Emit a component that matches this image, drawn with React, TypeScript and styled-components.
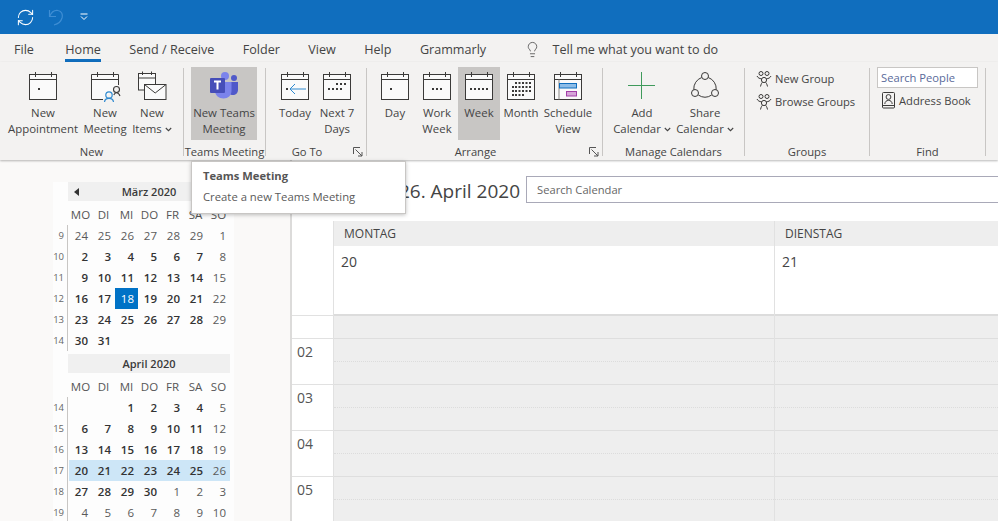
import React from "react";
import styled, { createGlobalStyle } from "styled-components";
import { Lightbulb, RefreshCw } from "lucide-react";

const GlobalStyle = createGlobalStyle`
  html, body {
    margin: 0;
    padding: 0;
    background: #fff;
    overflow: hidden;
  }
  * {
    box-sizing: border-box;
  }
`;

const Window = styled.div`
  width: 998px;
  height: 521px;
  overflow: hidden;
  position: relative;
  display: flex;
  flex-direction: column;
  font-family: "Open Sans", "Noto Sans", sans-serif;
  font-size: 11.2px;
  color: #444;
`;

const TitleBar = styled.div`
  height: 34px;
  flex: none;
  background: #106ebe;
  display: flex;
  align-items: center;
  padding-left: 16px;
  color: #fff;
`;

const QuickButton = styled.div<{ $width: number }>`
  width: ${(p) => p.$width}px;
  display: flex;
  align-items: center;
  color: #fff;
`;

const Tabs = styled.div`
  height: 28px;
  flex: none;
  background: #f3f2f1;
  display: flex;
  padding-left: 14px;
  gap: 28.4px;
`;

const Tab = styled.div<{ $active?: boolean; $extra?: number }>`
  height: 28px;
  padding-top: 7px;
  line-height: 18px;
  font-size: 12.6px;
  margin-right: ${(p) => p.$extra ?? 0}px;
  border-bottom: 3px solid ${(p) => (p.$active ? "#106ebe" : "transparent")};
  white-space: nowrap;
`;

const TellMe = styled.div`
  display: flex;
  align-items: center;
  gap: 12px;
  height: 28px;
  padding-top: 2px;
  margin-left: 9px;
  font-size: 12.6px;
`;

const Ribbon = styled.div`
  height: 98px;
  flex: none;
  background: #f3f2f1;
  display: flex;
  padding-top: 5px;
  position: relative;
  z-index: 1;
  box-shadow: 0 1px 2px rgba(0, 0, 0, 0.28);
`;

const Group = styled.div<{ $width: number }>`
  width: ${(p) => p.$width}px;
  flex: none;
  display: flex;
  flex-direction: column;
  height: 92px;
`;

const GroupBody = styled.div<{ $pad: number }>`
  height: 78px;
  padding-left: ${(p) => p.$pad}px;
  display: flex;
  align-items: flex-start;
`;

const StackBody = styled(GroupBody)`
  flex-direction: column;
`;

const GroupFooter = styled.div`
  height: 14px;
  line-height: 14px;
  display: flex;
  align-items: center;
`;

const GroupLabel = styled.div`
  flex: 1;
  text-align: center;
  white-space: nowrap;
`;

const LauncherSlot = styled.svg`
  width: 10px;
  height: 10px;
  margin: 0 3px 0 5px;
  flex: none;
`;

const GroupDivider = styled.div`
  width: 1px;
  height: 88px;
  margin-top: 1px;
  flex: none;
  background: #c8c6c4;
`;

const BigButton = styled.div<{ $width: number; $active?: boolean }>`
  width: ${(p) => p.$width}px;
  height: 73px;
  flex: none;
  padding-top: 4px;
  display: flex;
  flex-direction: column;
  align-items: center;
  background: ${(p) => (p.$active ? "#c8c6c4" : "transparent")};
`;

const ButtonText = styled.div`
  margin-top: 2px;
  font-size: 11.4px;
  line-height: 16px;
  text-align: center;
  white-space: nowrap;
`;

const Chevron = styled.svg`
  width: 7px;
  height: 5px;
  margin-left: 3px;
  vertical-align: 1px;
`;

const SmallRow = styled.div<{ $height: number }>`
  height: ${(p) => p.$height}px;
  display: flex;
  align-items: center;
  gap: 3px;
  white-space: nowrap;
`;

const SearchPeople = styled.div`
  width: 101px;
  height: 21px;
  background: #fff;
  border: 1px solid #c8c6c4;
  line-height: 19px;
  padding-left: 3px;
  color: #5a6a9a;
`;

const AddressRow = styled(SmallRow)`
  padding-left: 5px;
  gap: 4px;
  margin-top: 1px;
`;

const Body = styled.div`
  flex: 1;
  min-height: 0;
  display: flex;
`;

const Nav = styled.div`
  width: 292px;
  flex: none;
  background: #faf9f8;
  border-right: 2px solid #dcdbda;
  padding: 22px 0 0 53px;
`;

const NavPanel = styled.div`
  width: 181px;
  height: 100%;
  background: #fdfdfd;
`;

const Month = styled.div`
  height: 172px;
`;

const MonthHeader = styled.div`
  margin-left: 15px;
  width: 162px;
  height: 19px;
  background: #f0f0f0;
  display: flex;
  align-items: center;
  justify-content: center;
  position: relative;
  font-weight: 600;
  font-size: 11px;
  color: #3a3a3a;
`;

const PrevArrow = styled.div`
  position: absolute;
  left: 6px;
  top: 6px;
  border-style: solid;
  border-width: 4px 5px 4px 0;
  border-color: transparent #333 transparent transparent;
`;

const WeekdayRow = styled.div`
  margin: 3px 0 0 16px;
  height: 21px;
  display: grid;
  grid-template-columns: repeat(7, 23px);
`;

const Weekday = styled.div`
  line-height: 21px;
  text-align: center;
  font-size: 11.5px;
  color: #555;
`;

const WeekRow = styled.div`
  height: 21px;
  display: flex;
`;

const WeekNumber = styled.div`
  width: 15px;
  flex: none;
  border-right: 1px solid #c8c6c4;
  padding-right: 3px;
  text-align: right;
  font-size: 9.5px;
  line-height: 21px;
  color: #666;
`;

const Days = styled.div<{ $current?: boolean }>`
  margin-left: 1px;
  display: grid;
  grid-template-columns: repeat(7, 23px);
  background: ${(p) => (p.$current ? "#cde6f7" : "transparent")};
`;

const Day = styled.div<{ $bold?: boolean; $selected?: boolean }>`
  height: 21px;
  line-height: 21px;
  padding-right: 4px;
  text-align: right;
  font-size: 11.5px;
  font-weight: ${(p) => (p.$bold ? 600 : 400)};
  color: ${(p) => (p.$selected ? "#fff" : p.$bold ? "#333" : "#5a5a5a")};
  background: ${(p) => (p.$selected ? "#0072c6" : "transparent")};
`;

const Main = styled.div`
  flex: 1;
  min-width: 0;
  display: flex;
  flex-direction: column;
  background: #fff;
`;

const MainHeader = styled.div`
  height: 61px;
  flex: none;
  display: flex;
  padding-top: 16px;
`;

const DateTitle = styled.div`
  width: 228px;
  flex: none;
  text-align: right;
  white-space: nowrap;
  font-size: 19px;
  line-height: 30px;
  color: #444;
`;

const SearchCalendar = styled.div`
  margin-left: 6px;
  width: 600px;
  flex: none;
  height: 27px;
  border: 1px solid #a9a9b8;
  line-height: 25px;
  padding-left: 10px;
  color: #666;
`;

const CalendarGrid = styled.div`
  flex: 1;
  display: flex;
`;

const TimeColumn = styled.div`
  width: 42px;
  flex: none;
  border-right: 1px solid #e1e1e1;
`;

const TimeSpacer = styled.div`
  height: 95px;
  border-bottom: 1px solid #e1e1e1;
`;

const TimeFirst = styled.div`
  height: 23px;
  border-bottom: 1px solid #e1e1e1;
`;

const TimeSlot = styled.div`
  height: 46px;
  border-bottom: 1px solid #e1e1e1;
  padding-left: 5px;
  font-size: 14px;
  line-height: 26px;
  color: #555;
`;

const DayColumn = styled.div<{ $width: number }>`
  width: ${(p) => p.$width}px;
  flex: none;
  border-right: 1px solid #e1e1e1;
`;

const DayHeader = styled.div`
  height: 25px;
  background: #eeeeee;
  padding-left: 10px;
  font-size: 12px;
  line-height: 25px;
  color: #444;
`;

const DateCell = styled.div`
  height: 70px;
  padding: 5px 0 0 7px;
  border-bottom: 2px solid #dcdcdc;
  font-size: 14px;
  line-height: 22px;
  color: #444;
`;

const Slot = styled.div<{ $short?: boolean }>`
  height: ${(p) => (p.$short ? 23 : 46)}px;
  background: #eeeeee;
  border-bottom: 1px solid #dedede;
`;

const HalfHour = styled.div`
  height: 23px;
  border-bottom: 1px dotted #dcdcdc;
`;

const Tooltip = styled.div`
  position: absolute;
  left: 191px;
  top: 161px;
  z-index: 3;
  width: 215px;
  height: 53px;
  background: #fff;
  border: 1px solid #c8c6c4;
  box-shadow: 0 1px 4px rgba(0, 0, 0, 0.25);
  padding: 6px 0 0 11px;
`;

const TooltipTitle = styled.div`
  font-weight: 700;
  line-height: 16px;
  color: #555;
`;

const TooltipText = styled.div`
  margin-top: 5px;
  font-size: 11.3px;
  line-height: 16px;
  color: #5a5a5a;
`;

const Icon = styled.svg`
  width: 32px;
  height: 32px;
  flex: none;
  display: block;
`;

const INK = "#3b3a39";

type Dot = [number, number];

function CalendarIcon({ dots = [], children }: { dots?: Dot[]; children?: React.ReactNode }) {
  return (
    <Icon viewBox="0 0 32 32">
      <rect x="2.5" y="3.5" width="27" height="25" fill="#fafafa" stroke={INK} />
      <path d="M2.5 8.5H29.5M8.5 1V6M24.5 1V6" fill="none" stroke={INK} />
      {dots.map(([x, y]) => (
        <rect key={`${x}-${y}`} x={x - 1} y={y - 1} width="2" height="2" fill={INK} />
      ))}
      {children}
    </Icon>
  );
}

const monthDots: Dot[] = [
  [11, 12], [14.5, 12], [18, 12], [21.5, 12], [25, 12],
  [8, 16], [11, 16], [14.5, 16], [18, 16], [21.5, 16], [25, 16],
  [8, 20], [11, 20], [14.5, 20], [18, 20], [21.5, 20], [25, 20],
  [8, 24], [11, 24], [14.5, 24], [18, 24],
];

function MeetingIcon() {
  return (
    <Icon viewBox="0 0 32 32">
      <path d="M14 28.5H2.5V3.5H29.5V14" fill="#fafafa" stroke={INK} />
      <path d="M2.5 8.5H29.5M8.5 1V6M24.5 1V6" fill="none" stroke={INK} />
      <circle cx="20" cy="24" r="3.2" fill="none" stroke="#2f8ad0" strokeWidth="1.2" />
      <path d="M15.5 31C15.8 28.4 17.5 27.4 20 27.4S24.2 28.4 24.5 31" fill="none" stroke="#2f8ad0" strokeWidth="1.2" />
      <circle cx="27.5" cy="18.5" r="3" fill="none" stroke={INK} strokeWidth="1.1" />
      <path d="M24.8 24C25.4 22.4 26.4 21.8 27.5 21.8S30 22.4 31 25" fill="none" stroke={INK} strokeWidth="1.1" />
    </Icon>
  );
}

function ItemsIcon() {
  return (
    <Icon viewBox="0 0 32 32">
      <rect x="2.5" y="2.5" width="17" height="16.5" fill="#fafafa" stroke={INK} />
      <path d="M2.5 7H19.5M6.5 0.5V4M15.5 0.5V4" fill="none" stroke={INK} />
      <rect x="8.5" y="13.5" width="21.5" height="15" fill="#fafafa" stroke={INK} />
      <path d="M8.5 13.5L19.2 22L30 13.5" fill="none" stroke={INK} />
    </Icon>
  );
}

function TeamsIcon() {
  return (
    <Icon viewBox="0 0 32 32">
      <circle cx="26" cy="7" r="3" fill="#5059c9" />
      <path d="M20 11H30V19C30 22 27.5 24 25 24C22 24 20 22 20 19Z" fill="#5059c9" />
      <circle cx="17" cy="5" r="4" fill="#7b83eb" />
      <path d="M7 11H23.5V20C23.5 24.5 20 27.5 15.5 27.5C11 27.5 7 24.5 7 20Z" fill="#7b83eb" />
      <rect x="2" y="7" width="15" height="15" rx="1" fill="#464eb8" />
      <path d="M6 10.5H13M9.5 10.5V18.5" stroke="#fff" strokeWidth="2" fill="none" />
    </Icon>
  );
}

function PlusIcon() {
  return (
    <Icon viewBox="0 0 32 32">
      <path d="M2 14.5H29M15.5 1V28" stroke="#3f9a5b" fill="none" />
    </Icon>
  );
}

function ShareIcon() {
  return (
    <Icon viewBox="0 0 32 32">
      <g fill="none" stroke={INK}>
        <circle cx="16" cy="5" r="3.5" />
        <circle cx="6" cy="22" r="3.5" />
        <circle cx="26" cy="22" r="3.5" />
        <path d="M12.7 6.5A12 12 0 0 0 4.8 18.7" />
        <path d="M19.3 6.5A12 12 0 0 1 27.2 18.7" />
        <path d="M9.3 24A12 12 0 0 0 22.7 24" />
      </g>
    </Icon>
  );
}

function GroupsIcon() {
  return (
    <svg width="16" height="16" viewBox="0 0 16 16" fill="none" stroke={INK} strokeWidth="1">
      <circle cx="5" cy="2.5" r="2" />
      <circle cx="11" cy="2.5" r="2" />
      <circle cx="8" cy="9" r="2.6" />
      <path d="M1 5C2 7 3.5 7.6 5.6 7.8M15 5C14 7 12.5 7.6 10.4 7.8M4.5 15.5C5 13 6 11.6 6.5 11.2M11.5 15.5C11 13 10 11.6 9.5 11.2" />
    </svg>
  );
}

function BookIcon() {
  return (
    <svg width="13" height="17" viewBox="0 0 13 17" fill="none" stroke={INK} strokeWidth="1">
      <rect x="0.5" y="0.5" width="12" height="15.5" rx="1" />
      <path d="M0.5 13.5H12.5" />
      <circle cx="6.5" cy="5" r="2.4" />
      <path d="M2.8 12C3 9.6 4.4 8.4 6.5 8.4S10 9.6 10.2 12" />
    </svg>
  );
}

function UndoIcon() {
  return (
    <svg width="16" height="17" viewBox="0 0 16 17" fill="none" stroke="#3f8ed4" strokeWidth="1.2">
      <path d="M1.5 1V7.5H8" />
      <path d="M1.5 7.5C3.5 3 7 1 10 1.5C13.5 2 15 5 14 9C13 12.5 10 15 6 16" />
    </svg>
  );
}

function Launcher() {
  return (
    <LauncherSlot viewBox="0 0 10 10" fill="none" stroke="#555" strokeWidth="1">
      <path d="M0.5 7V0.5H7" />
      <path d="M2.5 2.5L9 9M9 5V9H5" />
    </LauncherSlot>
  );
}

function More() {
  return (
    <Chevron viewBox="0 0 7 5" fill="none" stroke="#444" strokeWidth="1.1">
      <path d="M0.8 1L3.5 3.7L6.2 1" />
    </Chevron>
  );
}

type RibbonButtonProps = {
  width: number;
  icon: React.ReactNode;
  lines: string[];
  active?: boolean;
  more?: boolean;
};

function RibbonButton({ width, icon, lines, active, more }: RibbonButtonProps) {
  return (
    <BigButton $width={width} $active={active}>
      {icon}
      <ButtonText>
        {lines[0]}
        {lines[1] ? <br /> : null}
        {lines[1]}
        {more ? <More /> : null}
      </ButtonText>
    </BigButton>
  );
}

type Cell = { d: number; b?: boolean; s?: boolean } | null;

// bold = in month and not a sunday
function cells(list: number[], boldFrom: number, boldTo: number, blanks = 0, trim = 7): Cell[] {
  const out: Cell[] = [];
  list.forEach((d, i) => {
    if (i < blanks || i >= trim) {
      out.push(null);
      return;
    }
    const bold = i >= boldFrom && i <= boldTo && i < 6;
    out.push({ d, b: bold });
  });
  return out;
}

const march: { wk: number; days: Cell[] }[] = [
  { wk: 9, days: cells([24, 25, 26, 27, 28, 29, 1], 9, 9) },
  { wk: 10, days: cells([2, 3, 4, 5, 6, 7, 8], 0, 6) },
  { wk: 11, days: cells([9, 10, 11, 12, 13, 14, 15], 0, 6) },
  {
    wk: 12,
    days: [
      { d: 16, b: true }, { d: 17, b: true }, { d: 18, s: true }, { d: 19, b: true },
      { d: 20, b: true }, { d: 21, b: true }, { d: 22 },
    ],
  },
  { wk: 13, days: cells([23, 24, 25, 26, 27, 28, 29], 0, 6) },
  { wk: 14, days: cells([30, 31, 0, 0, 0, 0, 0], 0, 6, 0, 2) },
];

const april: { wk: number; days: Cell[]; current?: boolean }[] = [
  { wk: 14, days: cells([0, 0, 1, 2, 3, 4, 5], 0, 6, 2) },
  { wk: 15, days: cells([6, 7, 8, 9, 10, 11, 12], 0, 6) },
  { wk: 16, days: cells([13, 14, 15, 16, 17, 18, 19], 0, 6) },
  { wk: 17, days: cells([20, 21, 22, 23, 24, 25, 26], 0, 6), current: true },
  { wk: 18, days: cells([27, 28, 29, 30, 1, 2, 3], 0, 3) },
  { wk: 19, days: cells([4, 5, 6, 7, 8, 9, 10], 9, 9) },
];

const weekdays = ["MO", "DI", "MI", "DO", "FR", "SA", "SO"];

function MiniMonth({
  title,
  arrow,
  weeks,
}: {
  title: string;
  arrow?: boolean;
  weeks: { wk: number; days: Cell[]; current?: boolean }[];
}) {
  return (
    <Month>
      <MonthHeader>
        {arrow ? <PrevArrow /> : null}
        {title}
      </MonthHeader>
      <WeekdayRow>
        {weekdays.map((w) => (
          <Weekday key={w}>{w}</Weekday>
        ))}
      </WeekdayRow>
      {weeks.map((week) => (
        <WeekRow key={week.wk}>
          <WeekNumber>{week.wk}</WeekNumber>
          <Days $current={week.current}>
            {week.days.map((c, i) => (
              <Day key={i} $bold={c?.b} $selected={c?.s}>
                {c?.d}
              </Day>
            ))}
          </Days>
        </WeekRow>
      ))}
    </Month>
  );
}

function Slots() {
  return (
    <>
      <Slot $short />
      {[2, 3, 4, 5].map((n) => (
        <Slot key={n}>
          <HalfHour />
        </Slot>
      ))}
    </>
  );
}

export default function App() {
  return (
    <>
      <GlobalStyle />
      <Window>
        <TitleBar>
          <QuickButton $width={32}>
            <RefreshCw size={19} strokeWidth={1.3} />
          </QuickButton>
          <QuickButton $width={32}>
            <UndoIcon />
          </QuickButton>
          <QuickButton $width={10}>
            <svg width="8" height="8" viewBox="0 0 8 8" fill="none" stroke="#fff">
              <path d="M0.5 1H7.5M1 3.5L4 6.5L7 3.5" />
            </svg>
          </QuickButton>
        </TitleBar>

        <Tabs>
          <Tab $extra={3}>File</Tab>
          <Tab $active>Home</Tab>
          <Tab>Send / Receive</Tab>
          <Tab>Folder</Tab>
          <Tab>View</Tab>
          <Tab>Help</Tab>
          <Tab>Grammarly</Tab>
          <TellMe>
            <Lightbulb size={17} strokeWidth={1.1} />
            Tell me what you want to do
          </TellMe>
        </Tabs>

        <Ribbon>
          <Group $width={183}>
            <GroupBody $pad={7}>
              <RibbonButton width={72} icon={<CalendarIcon dots={[[12, 18]]} />} lines={["New", "Appointment"]} />
              <RibbonButton width={52} icon={<MeetingIcon />} lines={["New", "Meeting"]} />
              <RibbonButton width={42} icon={<ItemsIcon />} lines={["New", "Items"]} more />
            </GroupBody>
            <GroupFooter>
              <GroupLabel>New</GroupLabel>
            </GroupFooter>
          </Group>
          <GroupDivider />

          <Group $width={81}>
            <GroupBody $pad={7}>
              <RibbonButton width={66} icon={<TeamsIcon />} lines={["New Teams", "Meeting"]} active />
            </GroupBody>
            <GroupFooter>
              <GroupLabel>Teams Meeting</GroupLabel>
            </GroupFooter>
          </Group>
          <GroupDivider />

          <Group $width={100}>
            <GroupBody $pad={8}>
              <RibbonButton
                width={42}
                icon={
                  <CalendarIcon dots={[[8, 18]]}>
                    <path d="M27 18H11M16 13L11 18L16 23" fill="none" stroke="#2f8ad0" />
                  </CalendarIcon>
                }
                lines={["Today"]}
              />
              <RibbonButton
                width={42}
                icon={
                  <CalendarIcon
                    dots={[
                      [16, 13], [20, 13], [24, 13],
                      [8, 18], [12, 18], [16, 18], [20, 18],
                    ]}
                  />
                }
                lines={["Next 7", "Days"]}
              />
            </GroupBody>
            <GroupFooter>
              <GroupLabel>Go To</GroupLabel>
              <Launcher />
            </GroupFooter>
          </Group>
          <GroupDivider />

          <Group $width={235}>
            <GroupBody $pad={7}>
              <RibbonButton width={42} icon={<CalendarIcon dots={[[12, 18]]} />} lines={["Day"]} />
              <RibbonButton
                width={42}
                icon={<CalendarIcon dots={[[12, 18], [16, 18], [20, 18]]} />}
                lines={["Work", "Week"]}
              />
              <RibbonButton
                width={42}
                active
                icon={<CalendarIcon dots={[[8, 18], [12, 18], [16, 18], [20, 18], [24, 18]]} />}
                lines={["Week"]}
              />
              <RibbonButton width={42} icon={<CalendarIcon dots={monthDots} />} lines={["Month"]} />
              <RibbonButton
                width={52}
                icon={
                  <CalendarIcon>
                    <path d="M7 8.5V28.5" stroke="#8a8886" fill="none" />
                    <rect x="7.5" y="12.5" width="17" height="4.5" fill="#8dbde8" stroke="#106ebe" />
                    <rect x="14.5" y="20.5" width="10" height="4.5" fill="#d6a5d8" stroke="#a33ea8" />
                  </CalendarIcon>
                }
                lines={["Schedule", "View"]}
              />
            </GroupBody>
            <GroupFooter>
              <GroupLabel>Arrange</GroupLabel>
              <Launcher />
            </GroupFooter>
          </Group>
          <GroupDivider />

          <Group $width={141}>
            <GroupBody $pad={7}>
              <RibbonButton width={64} icon={<PlusIcon />} lines={["Add", "Calendar"]} more />
              <RibbonButton width={62} icon={<ShareIcon />} lines={["Share", "Calendar"]} more />
            </GroupBody>
            <GroupFooter>
              <GroupLabel>Manage Calendars</GroupLabel>
            </GroupFooter>
          </Group>
          <GroupDivider />

          <Group $width={124}>
            <StackBody $pad={11}>
              <SmallRow $height={23}>
                <GroupsIcon />
                New Group
              </SmallRow>
              <SmallRow $height={23}>
                <GroupsIcon />
                Browse Groups
              </SmallRow>
            </StackBody>
            <GroupFooter>
              <GroupLabel>Groups</GroupLabel>
            </GroupFooter>
          </Group>
          <GroupDivider />

          <Group $width={115}>
            <StackBody $pad={7}>
              <SearchPeople>Search People</SearchPeople>
              <AddressRow $height={22}>
                <BookIcon />
                Address Book
              </AddressRow>
            </StackBody>
            <GroupFooter>
              <GroupLabel>Find</GroupLabel>
            </GroupFooter>
          </Group>
          <GroupDivider />
        </Ribbon>

        <Body>
          <Nav>
            <NavPanel>
              <MiniMonth title="März 2020" arrow weeks={march} />
              <MiniMonth title="April 2020" weeks={april} />
            </NavPanel>
          </Nav>
          <Main>
            <MainHeader>
              <DateTitle>20. - 26. April 2020</DateTitle>
              <SearchCalendar>Search Calendar</SearchCalendar>
            </MainHeader>
            <CalendarGrid>
              <TimeColumn>
                <TimeSpacer />
                <TimeFirst />
                {["02", "03", "04", "05"].map((t) => (
                  <TimeSlot key={t}>{t}</TimeSlot>
                ))}
              </TimeColumn>
              <DayColumn $width={441}>
                <DayHeader>MONTAG</DayHeader>
                <DateCell>20</DateCell>
                <Slots />
              </DayColumn>
              <DayColumn $width={400}>
                <DayHeader>DIENSTAG</DayHeader>
                <DateCell>21</DateCell>
                <Slots />
              </DayColumn>
            </CalendarGrid>
          </Main>
        </Body>

        <Tooltip>
          <TooltipTitle>Teams Meeting</TooltipTitle>
          <TooltipText>Create a new Teams Meeting</TooltipText>
        </Tooltip>
      </Window>
    </>
  );
}
